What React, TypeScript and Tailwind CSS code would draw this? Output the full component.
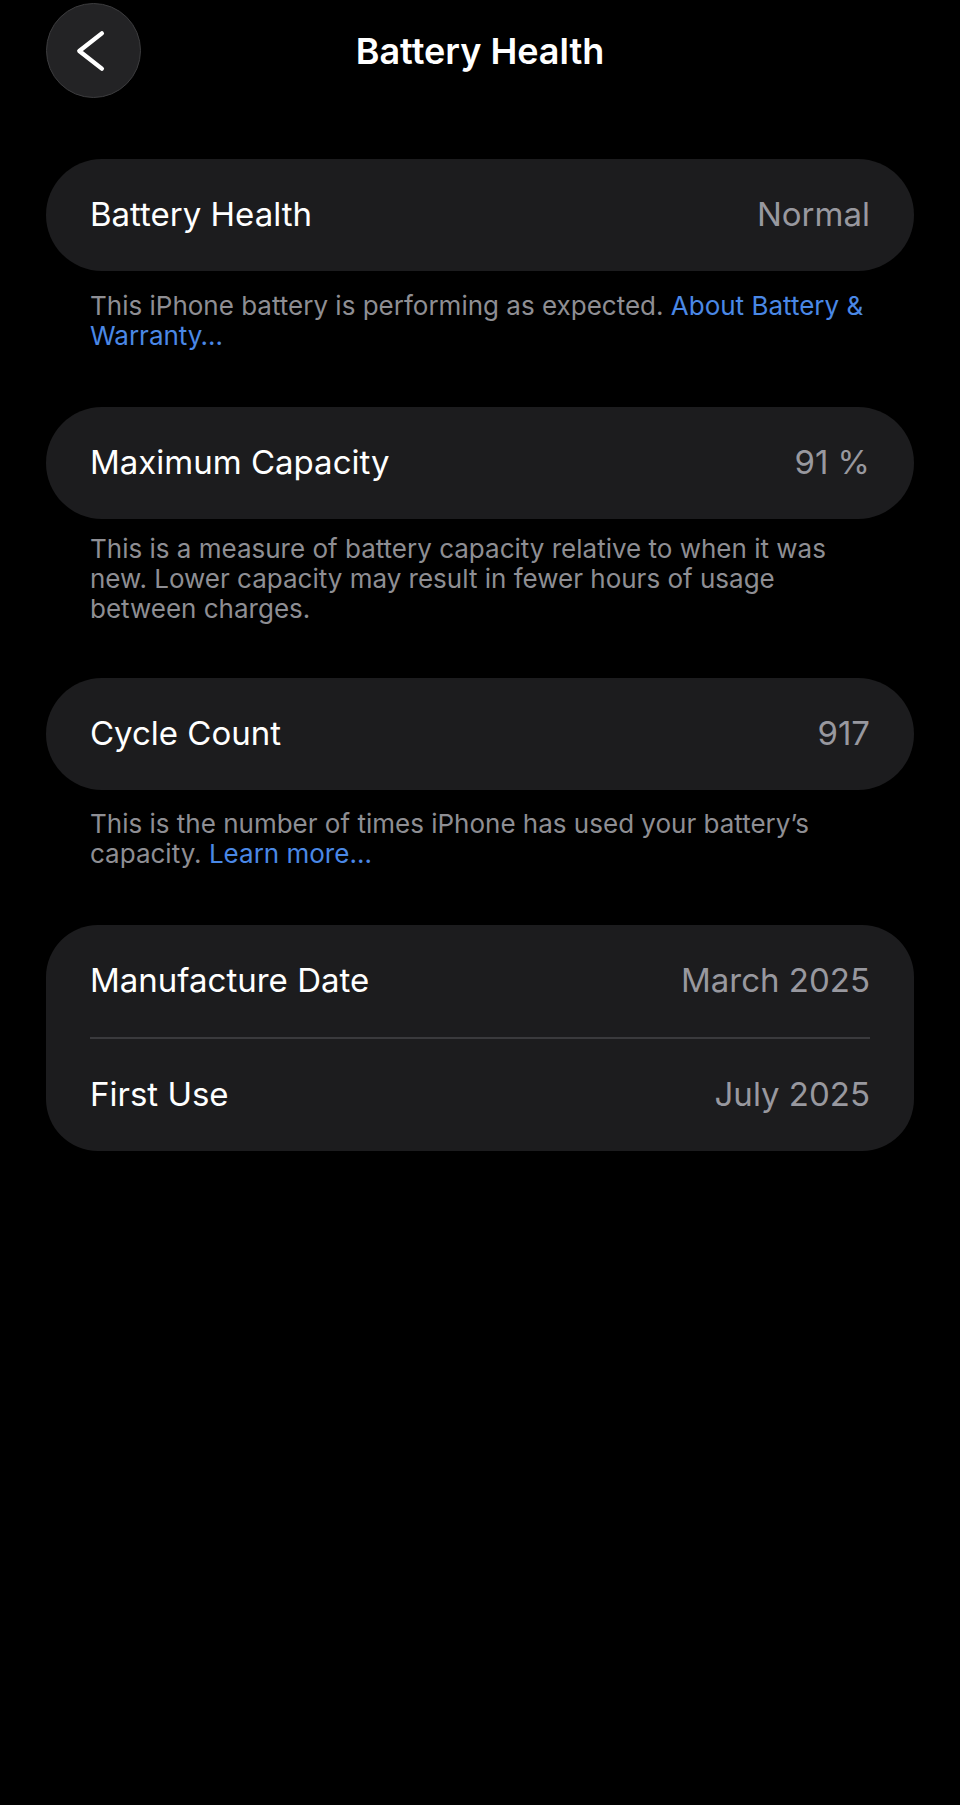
import React from "react";

const font = { fontFamily: "Inter, 'Noto Sans', sans-serif" };

function Row({ label, value }: { label: string; value: string }) {
    return (
        <div className="flex h-[112px] items-center justify-between px-[44px]">
            <span className="text-[33px] text-white">{label}</span>
            <span className="text-[33px] text-[#98989f]">{value}</span>
        </div>
    );
}

function Card({ children }: { children: React.ReactNode }) {
    return <div className="rounded-[56px] bg-[#1c1c1e]">{children}</div>;
}

function Link({ children }: { children: React.ReactNode }) {
    return <span className="text-[#4a88e6]">{children}</span>;
}

const note = "pl-[44px] pr-[10px] text-[26px] leading-[30px] text-[#8e8e93]";

export default function App() {
    return (
        <div className="min-h-[1805px] w-full bg-black" style={font}>
            {/* Header */}
            <div className="grid grid-cols-[1fr_auto_1fr] items-center px-[46px] pt-[3px]">
                <button className="flex h-[95px] w-[95px] items-center justify-center rounded-full border border-[#3c3c3e] bg-[#232325]">
                    <svg width="95" height="95" viewBox="0 0 95 95" fill="none">
                        <path
                            d="M56 30 L33 48 L56 66"
                            stroke="white"
                            strokeWidth="4.5"
                            strokeLinecap="round"
                            strokeLinejoin="round"
                        />
                    </svg>
                </button>
                <h1 className="text-[36px] font-semibold text-white">Battery Health</h1>
                <div />
            </div>

            {/* Content */}
            <div className="mt-[61px] px-[46px]">
                <Card>
                    <Row label="Battery Health" value="Normal" />
                </Card>
                <p className={`mt-[20px] ${note}`}>
                    This iPhone battery is performing as expected. <Link>About Battery &amp;</Link>
                    <br />
                    <Link>Warranty…</Link>
                </p>

                <div className="mt-[56px]">
                    <Card>
                        <Row label="Maximum Capacity" value="91 %" />
                    </Card>
                </div>
                <p className={`mt-[15px] ${note}`}>
                    This is a measure of battery capacity relative to when it was
                    <br />
                    new. Lower capacity may result in fewer hours of usage
                    <br />
                    between charges.
                </p>

                <div className="mt-[54px]">
                    <Card>
                        <Row label="Cycle Count" value="917" />
                    </Card>
                </div>
                <p className={`mt-[19px] ${note}`}>
                    This is the number of times iPhone has used your battery’s
                    <br />
                    capacity. <Link>Learn more…</Link>
                </p>

                <div className="mt-[56px]">
                    <div className="rounded-[52px] bg-[#1c1c1e]">
                        <Row label="Manufacture Date" value="March 2025" />
                        <div className="mx-[44px] h-[2px] bg-[#3a3a3d]" />
                        <Row label="First Use" value="July 2025" />
                    </div>
                </div>
            </div>
        </div>
    );
}
